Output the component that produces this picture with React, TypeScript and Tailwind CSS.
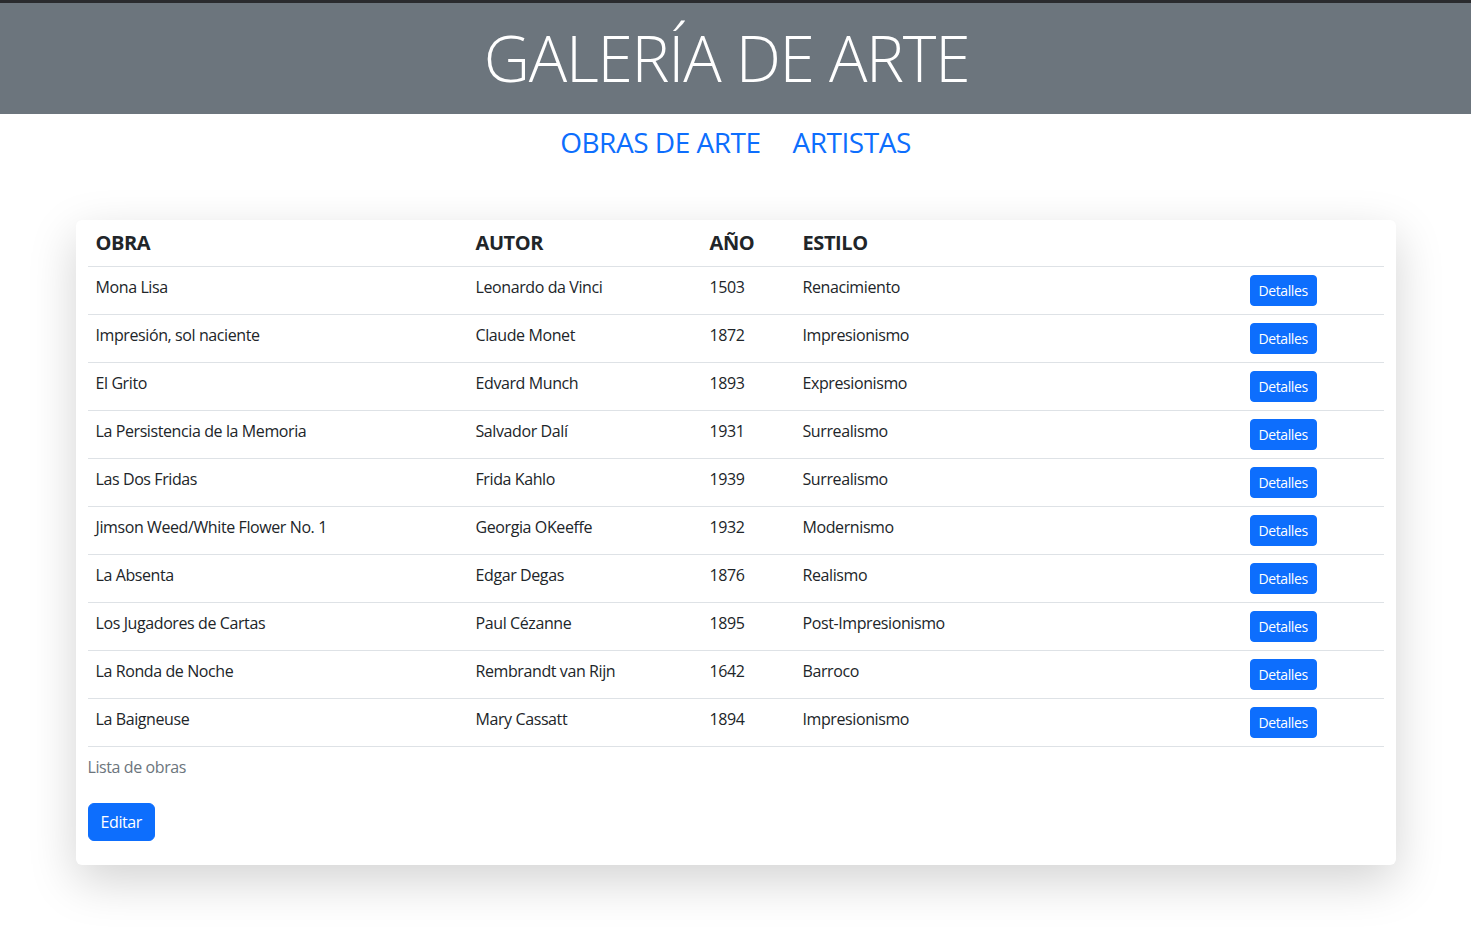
import React from "react";

interface Obra {
  titulo: string;
  autor: string;
  anio: number;
  estilo: string;
}

const obras: Obra[] = [
  { titulo: "Mona Lisa", autor: "Leonardo da Vinci", anio: 1503, estilo: "Renacimiento" },
  { titulo: "Impresión, sol naciente", autor: "Claude Monet", anio: 1872, estilo: "Impresionismo" },
  { titulo: "El Grito", autor: "Edvard Munch", anio: 1893, estilo: "Expresionismo" },
  { titulo: "La Persistencia de la Memoria", autor: "Salvador Dalí", anio: 1931, estilo: "Surrealismo" },
  { titulo: "Las Dos Fridas", autor: "Frida Kahlo", anio: 1939, estilo: "Surrealismo" },
  { titulo: "Jimson Weed/White Flower No. 1", autor: "Georgia OKeeffe", anio: 1932, estilo: "Modernismo" },
  { titulo: "La Absenta", autor: "Edgar Degas", anio: 1876, estilo: "Realismo" },
  { titulo: "Los Jugadores de Cartas", autor: "Paul Cézanne", anio: 1895, estilo: "Post-Impresionismo" },
  { titulo: "La Ronda de Noche", autor: "Rembrandt van Rijn", anio: 1642, estilo: "Barroco" },
  { titulo: "La Baigneuse", autor: "Mary Cassatt", anio: 1894, estilo: "Impresionismo" },
];

const App = () => {
  return (
    <div className="min-h-screen bg-white text-[#212529] font-['Open_Sans','Noto_Sans',sans-serif] tracking-[-0.025em]">
      {/* franja superior */}
      <div className="h-[3px] bg-[#2a2b2e]" />

      {/* HEADER */}
      <header className="h-[111px] bg-[#6c757d] flex items-center justify-center pr-[18px]">
        <h1 className="text-[64px] leading-[1.2] font-light text-white tracking-[-0.02em]">GALERÍA DE ARTE</h1>
      </header>

      {/* NAV */}
      <nav className="flex justify-center mt-1 tracking-[-0.03em]">
        <a href="#" className="px-4 py-2 text-[28px] leading-[1.2] text-[#0d6efd]">
          OBRAS DE ARTE
        </a>
        <a href="#" className="px-4 py-2 text-[28px] leading-[1.2] text-[#0d6efd]">
          ARTISTAS
        </a>
      </nav>

      {/* CARD */}
      <div className="w-[1320px] mx-auto mt-[52px] bg-white rounded-md shadow-[0_1rem_3rem_rgba(0,0,0,0.175)] px-3 pb-6">
        <table className="w-full table-fixed border-collapse">
          <colgroup>
            <col className="w-[380px]" />
            <col className="w-[234px]" />
            <col className="w-[93px]" />
            <col className="w-[447px]" />
            <col />
          </colgroup>
          <thead>
            <tr className="border-b border-[#dee2e6]">
              <th className="text-left px-2 py-2 text-[20px] leading-[30px] font-bold">OBRA</th>
              <th className="text-left px-2 py-2 text-[20px] leading-[30px] font-bold">AUTOR</th>
              <th className="text-left px-2 py-2 text-[20px] leading-[30px] font-bold">AÑO</th>
              <th className="text-left px-2 py-2 text-[20px] leading-[30px] font-bold">ESTILO</th>
              <th />
            </tr>
          </thead>
          <tbody>
            {obras.map((obra) => (
              <tr key={obra.titulo} className="border-b border-[#dee2e6] text-base leading-6">
                <td className="align-top px-2 py-2">{obra.titulo}</td>
                <td className="align-top px-2 py-2">{obra.autor}</td>
                <td className="align-top px-2 py-2">{obra.anio}</td>
                <td className="align-top px-2 py-2">{obra.estilo}</td>
                <td className="align-top px-2 py-2">
                  <button
                    type="button"
                    className="block bg-[#0d6efd] border border-[#0d6efd] text-white text-sm leading-[21px] px-2 py-1 rounded-[4px]"
                  >
                    Detalles
                  </button>
                </td>
              </tr>
            ))}
          </tbody>
          <caption className="caption-bottom text-left py-2 text-base leading-6 text-[#6c757d]">Lista de obras</caption>
        </table>
        <button
          type="button"
          className="mt-4 bg-[#0d6efd] border border-[#0d6efd] text-white text-base leading-6 px-3 py-1.5 rounded-md"
        >
          Editar
        </button>
      </div>
    </div>
  );
};

export default App;
